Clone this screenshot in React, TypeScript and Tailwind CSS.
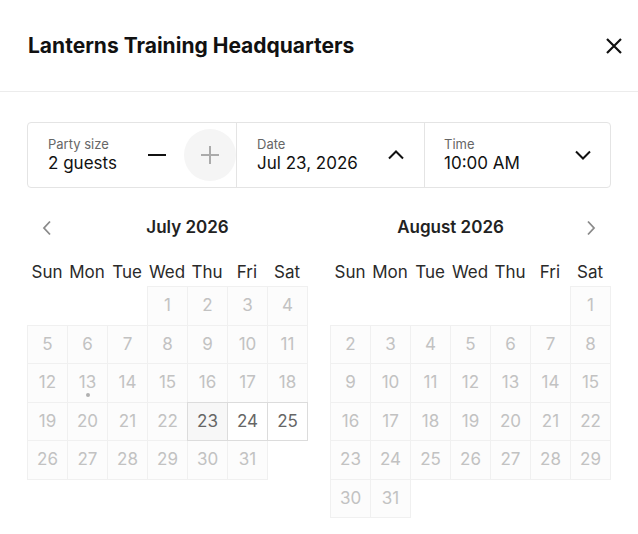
import React from "react";

type Day = { n: number; state: "off" | "sel" | "on" } | null;

const weekdays = ["Sun", "Mon", "Tue", "Wed", "Thu", "Fri", "Sat"];

function buildMonth(startDay: number, days: number, available: number[], selected: number | null): Day[] {
  const cells: Day[] = [];
  for (let i = 0; i < startDay; i++) cells.push(null);
  for (let d = 1; d <= days; d++) {
    let state: "off" | "sel" | "on" = "off";
    if (d === selected) state = "sel";
    else if (available.includes(d)) state = "on";
    cells.push({ n: d, state });
  }
  return cells;
}

const july = buildMonth(3, 31, [24, 25], 23);
const august = buildMonth(6, 31, [], null);

function ChevronLeft() {
  return (
    <svg width="10" height="16" viewBox="0 0 10 16" fill="none">
      <path d="M8 1.5L2 8l6 6.5" stroke="#8a8a8a" strokeWidth="1.8" />
    </svg>
  );
}

function ChevronRight() {
  return (
    <svg width="10" height="16" viewBox="0 0 10 16" fill="none">
      <path d="M2 1.5L8 8l-6 6.5" stroke="#8a8a8a" strokeWidth="1.8" />
    </svg>
  );
}

function Month({ title, cells, side }: { title: string; cells: Day[]; side: "left" | "right" }) {
  return (
    <div className="w-[281px]">
      <div className="flex h-[24px] items-center">
        {side === "left" && (
          <div className="flex w-[40px] items-center justify-center">
            <ChevronLeft />
          </div>
        )}
        <div className="flex-1 text-center text-[17px] font-semibold text-[#222]">{title}</div>
        {side === "right" && (
          <div className="flex w-[40px] items-center justify-center">
            <ChevronRight />
          </div>
        )}
      </div>
      <div className="mt-[20px] grid h-[26px] grid-cols-[repeat(7,40px)] items-center">
        {weekdays.map((w) => (
          <div key={w} className="text-center text-[17px] text-[#2a2a2a]">
            {w}
          </div>
        ))}
      </div>
      <div className="grid grid-cols-[repeat(7,40px)] auto-rows-[38.5px]">
        {cells.map((c, i) =>
          c === null ? (
            <div key={i} />
          ) : (
            <div
              key={i}
              className={
                c.state === "off"
                  ? "relative flex h-[39.5px] w-[41px] items-center justify-center border border-[#f0f0f0] bg-[#fcfcfc] text-[17px] text-[#c2c2c2]"
                  : c.state === "sel"
                  ? "relative z-10 flex h-[39.5px] w-[41px] items-center justify-center border border-[#dcdcdc] bg-[#f7f7f7] text-[17px] text-[#666]"
                  : "relative z-10 flex h-[39.5px] w-[41px] items-center justify-center border border-[#dcdcdc] bg-white text-[17px] text-[#666]"
              }
            >
              {c.n}
              {side === "left" && c.n === 13 && (
                <span className="absolute left-1/2 top-[29px] h-[4px] w-[4px] -translate-x-1/2 rounded-full bg-[#b0b0b0]" />
              )}
            </div>
          )
        )}
      </div>
    </div>
  );
}

export default function App() {
  return (
    <div className="h-[534px] w-[638px] bg-white" style={{ fontFamily: "Inter, 'Noto Sans', sans-serif" }}>
      <div className="flex h-[92px] items-center justify-between border-b border-[#ececec] pl-[28px] pr-[16px]">
        <h1 className="text-[21px] font-bold text-[#111]">Lanterns Training Headquarters</h1>
        <svg width="16" height="16" viewBox="0 0 16 16" fill="none">
          <path d="M1 1l14 14M15 1L1 15" stroke="#111" strokeWidth="2.2" />
        </svg>
      </div>

      <div className="mx-[27px] mt-[30px] flex h-[66px] rounded-[4px] border border-[#e4e4e4]">
        <div className="flex w-[208px] items-center pl-[20px]">
          <div className="flex-1">
            <div className="text-[13px] leading-[16px] text-[#666]">Party size</div>
            <div className="text-[17px] leading-[22px] text-[#111]">2 guests</div>
          </div>
          <div className="mr-[18px] h-[2px] w-[18px] bg-[#111]" />
          <div className="flex h-[52px] w-[52px] items-center justify-center rounded-full bg-[#f5f5f5]">
            <svg width="20" height="20" viewBox="0 0 20 20" fill="none">
              <path d="M10 1v18M1 10h18" stroke="#ababab" strokeWidth="2" />
            </svg>
          </div>
        </div>
        <div className="flex w-[188px] items-center justify-between border-l border-[#e4e4e4] pl-[20px] pr-[19px]">
          <div>
            <div className="text-[13px] leading-[16px] text-[#666]">Date</div>
            <div className="text-[17px] leading-[22px] text-[#111]">Jul 23, 2026</div>
          </div>
          <svg width="18" height="12" viewBox="0 0 18 12" fill="none">
            <path d="M2 9.5L9 2.5l7 7" stroke="#111" strokeWidth="2" />
          </svg>
        </div>
        <div className="flex flex-1 items-center justify-between border-l border-[#e4e4e4] pl-[19px] pr-[18px]">
          <div>
            <div className="text-[13px] leading-[16px] text-[#666]">Time</div>
            <div className="text-[17px] leading-[22px] text-[#111]">10:00 AM</div>
          </div>
          <svg width="18" height="12" viewBox="0 0 18 12" fill="none">
            <path d="M2 2.5l7 7 7-7" stroke="#111" strokeWidth="2" />
          </svg>
        </div>
      </div>

      <div className="mx-[27px] mt-[28px] flex justify-between">
        <Month title="July 2026" cells={july} side="left" />
        <Month title="August 2026" cells={august} side="right" />
      </div>
    </div>
  );
}
